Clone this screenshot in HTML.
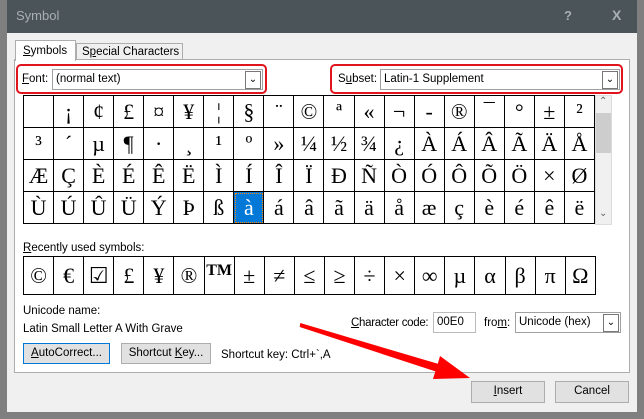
<!DOCTYPE html><html><head><style>
*{box-sizing:border-box;margin:0;padding:0}
body{width:644px;height:419px;background:#7f7f7f;font-family:"Liberation Sans",sans-serif;font-size:11.5px;color:#000;position:relative;overflow:hidden}
.a{position:absolute;white-space:nowrap}
.win{left:7px;top:0;width:630px;height:412px;background:#f0f0f0}
.title{left:7px;top:0;width:630px;height:33px;background:#4a5459;color:#a9b0b4;font-size:13px}
.grid{border-collapse:collapse;font-family:"Liberation Serif",serif;font-size:22px;text-align:center}
.grid td{border:1px solid #000;width:30px;height:32px;padding:0;background:#fff}
.btn{background:#e1e1e1;border:1px solid #adadad;text-align:center;line-height:19px}
.combo{background:#fff;border:1px solid #a0a0a0;line-height:19px;padding-left:3px}
.dd{position:absolute;right:1px;top:1px;width:16px;height:18px;border:1px solid #777;background:#fff;font-size:10px;text-align:center;line-height:16px}
.red{border:2px solid #e0141c;border-radius:5px}
u{text-decoration:underline}
</style></head><body>
<div class="a win"></div>
<div class="a title"><span class="a" style="left:9px;top:8px">Symbol</span><span class="a" style="left:557px;top:8px;font-weight:bold">?</span><span class="a" style="left:605px;top:7px;font-weight:bold;font-size:14px">X</span></div>
<div class="a" style="left:14px;top:59px;width:616px;height:314px;background:#fff;border:1px solid #adadad"></div>
<div class="a" style="left:15px;top:40px;width:61px;height:21px;background:#fff;border:1px solid #adadad;border-bottom:none;padding:4px 0 0 7px"><u>S</u>ymbols</div>
<div class="a" style="left:76px;top:43px;width:107px;height:17px;background:#f0f0f0;border:1px solid #adadad;padding:2px 0 0 5px">S<u>p</u>ecial Characters</div>
<div class="a red" style="left:16px;top:64px;width:251px;height:30px"></div>
<span class="a" style="left:22px;top:73px"><u>F</u>ont:</span>
<div class="a combo" style="left:52px;top:69px;width:211px;height:21px">(normal text)<div class="dd">&#8964;</div></div>
<div class="a red" style="left:330px;top:64px;width:293px;height:30px"></div>
<span class="a" style="left:338px;top:73px">S<u>u</u>bset:</span>
<div class="a combo" style="left:380px;top:69px;width:240px;height:21px">Latin-1 Supplement<div class="dd">&#8964;</div></div>
<table class="a grid" style="left:23px;top:95px;width:572px">
<tr><td>&nbsp;</td><td>¡</td><td>¢</td><td>£</td><td>¤</td><td>¥</td><td>¦</td><td>§</td><td>¨</td><td>©</td><td>ª</td><td>«</td><td>¬</td><td>-</td><td>®</td><td>¯</td><td>°</td><td>±</td><td>²</td></tr>
<tr><td>³</td><td>´</td><td>µ</td><td>¶</td><td>·</td><td>¸</td><td>¹</td><td>º</td><td>»</td><td>¼</td><td>½</td><td>¾</td><td>¿</td><td>À</td><td>Á</td><td>Â</td><td>Ã</td><td>Ä</td><td>Å</td></tr>
<tr><td>Æ</td><td>Ç</td><td>È</td><td>É</td><td>Ê</td><td>Ë</td><td>Ì</td><td>Í</td><td>Î</td><td>Ï</td><td>Ð</td><td>Ñ</td><td>Ò</td><td>Ó</td><td>Ô</td><td>Õ</td><td>Ö</td><td>×</td><td>Ø</td></tr>
<tr><td>Ù</td><td>Ú</td><td>Û</td><td>Ü</td><td>Ý</td><td>Þ</td><td>ß</td><td style="background:#0078d7;color:#fff;outline:1px dotted #f80;outline-offset:-2px">à</td><td>á</td><td>â</td><td>ã</td><td>ä</td><td>å</td><td>æ</td><td>ç</td><td>è</td><td>é</td><td>ê</td><td>ë</td></tr>
</table>
<div class="a" style="left:595px;top:95px;width:17px;height:130px;background:#f0f0f0;border:1px solid #ddd"><div class="a" style="left:0;top:17px;width:15px;height:40px;background:#cdcdcd"></div><span class="a" style="left:3px;top:0;font-size:10px;color:#666">&#8963;</span><span class="a" style="left:3px;top:112px;font-size:10px;color:#666">&#8964;</span></div>
<span class="a" style="left:23px;top:242px"><u>R</u>ecently used symbols:</span>
<table class="a grid" style="left:23px;top:256px;width:573px;border:1px solid #888">
<tr><td style="height:38px">©</td><td>€</td><td>☑</td><td>£</td><td>¥</td><td>®</td><td style="font-size:16px;vertical-align:top;padding-top:5px"><b>TM</b></td><td>±</td><td>≠</td><td>≤</td><td>≥</td><td>÷</td><td>×</td><td>∞</td><td>µ</td><td>α</td><td>β</td><td>π</td><td>Ω</td></tr></table>
<span class="a" style="left:23px;top:305px">Unicode name:</span>
<span class="a" style="left:23px;top:323px">Latin Small Letter A With Grave</span>
<div class="a btn" style="left:23px;top:343px;width:87px;height:21px;border-color:#0078d7"><u>A</u>utoCorrect...</div>
<div class="a btn" style="left:121px;top:343px;width:90px;height:21px">Shortcut <u>K</u>ey...</div>
<span class="a" style="left:221px;top:349px">Shortcut key: Ctrl+`,A</span>
<span class="a" style="left:351px;top:317px;letter-spacing:-0.3px"><u>C</u>haracter code:</span>
<div class="a combo" style="left:433px;top:312px;width:43px;height:21px;border-color:#bbb">00E0</div>
<span class="a" style="left:484px;top:317px">fro<u>m</u>:</span>
<div class="a combo" style="left:515px;top:312px;width:106px;height:21px">Unicode (hex)<div class="dd">&#8964;</div></div>
<svg class="a" style="left:0;top:0" width="644" height="419"><polygon points="300.3,323 437.8,363.8 440,356 470,378 433,379 435.4,371.4 299.7,327" fill="#f00"/></svg>
<div class="a btn" style="left:471px;top:381px;width:74px;height:22px"><u>I</u>nsert</div>
<div class="a btn" style="left:555px;top:381px;width:74px;height:22px">Cancel</div>
</body></html>
